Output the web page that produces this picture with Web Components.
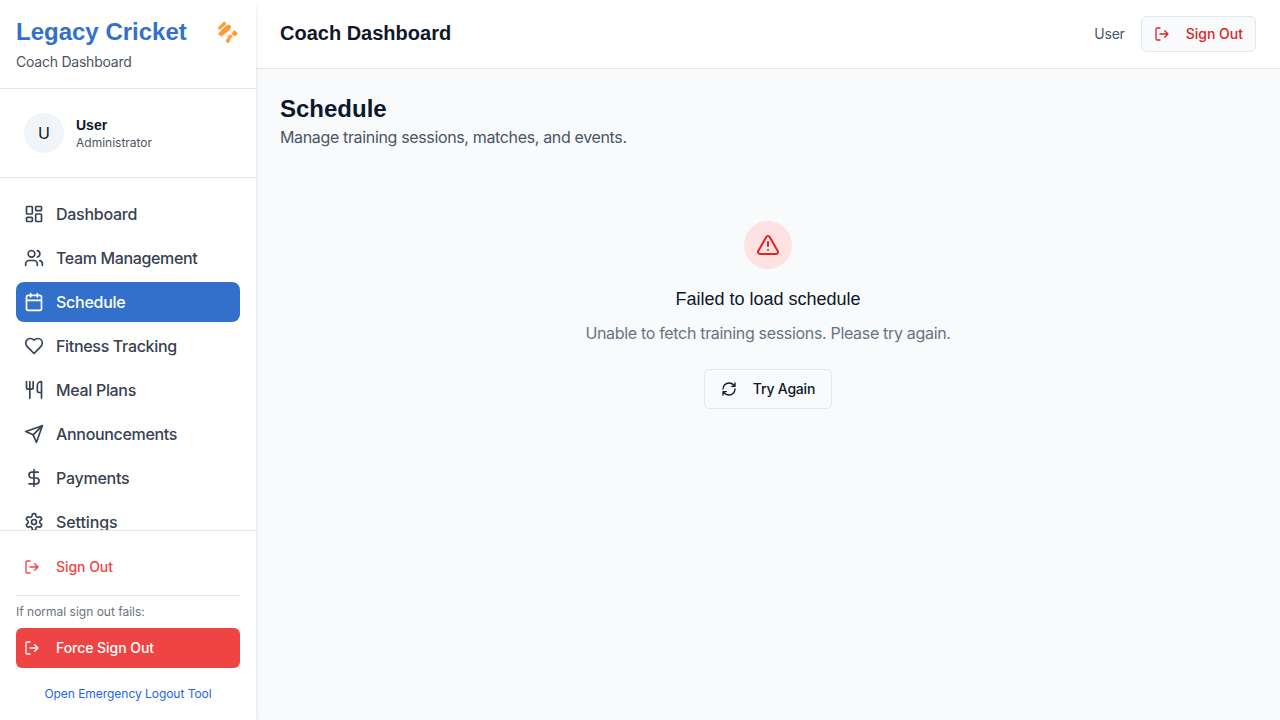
<!DOCTYPE html>
<html lang="en">
<head>
<meta charset="utf-8">
<title>Legacy Cricket</title>
<style>
html,body{margin:0;height:100%}
body{font-family:Inter,"Liberation Sans",sans-serif;font-size:16px;line-height:24px;color:#0f172a;background:#f8fafc;overflow:hidden}
</style>
</head>
<body>
<coach-app></coach-app>
<script>
const ICONS={
dashboard:'<rect width="7" height="9" x="3" y="3" rx="1"/><rect width="7" height="5" x="14" y="3" rx="1"/><rect width="7" height="9" x="14" y="12" rx="1"/><rect width="7" height="5" x="3" y="16" rx="1"/>',
users:'<path d="M16 21v-2a4 4 0 0 0-4-4H6a4 4 0 0 0-4 4v2"/><circle cx="9" cy="7" r="4"/><path d="M22 21v-2a4 4 0 0 0-3-3.87"/><path d="M16 3.13a4 4 0 0 1 0 7.75"/>',
calendar:'<path d="M8 2v4M16 2v4"/><rect width="18" height="18" x="3" y="4" rx="2"/><path d="M3 10h18"/>',
heart:'<path d="M19 14c1.49-1.46 3-3.21 3-5.5A5.5 5.5 0 0 0 16.5 3c-1.76 0-3 .5-4.5 2-1.5-1.5-2.74-2-4.5-2A5.5 5.5 0 0 0 2 8.5c0 2.3 1.5 4.05 3 5.5l7 7Z"/>',
utensils:'<path d="M3 2v7c0 1.1.9 2 2 2h4a2 2 0 0 0 2-2V2M7 2v20M21 15V2a5 5 0 0 0-5 5v6c0 1.1.9 2 2 2h3Zm0 0v7"/>',
send:'<path d="m22 2-7 20-4-9-9-4Z"/><path d="M22 2 11 13"/>',
dollar:'<path d="M12 2v20M17 5H9.5a3.5 3.5 0 0 0 0 7h5a3.5 3.5 0 0 1 0 7H6"/>',
settings:'<path d="M12.22 2h-.44a2 2 0 0 0-2 2v.18a2 2 0 0 1-1 1.73l-.43.25a2 2 0 0 1-2 0l-.15-.08a2 2 0 0 0-2.73.73l-.22.38a2 2 0 0 0 .73 2.73l.15.1a2 2 0 0 1 1 1.72v.51a2 2 0 0 1-1 1.74l-.15.09a2 2 0 0 0-.73 2.73l.22.38a2 2 0 0 0 2.73.73l.15-.08a2 2 0 0 1 2 0l.43.25a2 2 0 0 1 1 1.73V20a2 2 0 0 0 2 2h.44a2 2 0 0 0 2-2v-.18a2 2 0 0 1 1-1.73l.43-.25a2 2 0 0 1 2 0l.15.08a2 2 0 0 0 2.73-.73l.22-.39a2 2 0 0 0-.73-2.73l-.15-.08a2 2 0 0 1-1-1.74v-.5a2 2 0 0 1 1-1.74l.15-.09a2 2 0 0 0 .73-2.73l-.22-.38a2 2 0 0 0-2.73-.73l-.15.08a2 2 0 0 1-2 0l-.43-.25a2 2 0 0 1-1-1.73V4a2 2 0 0 0-2-2z"/><circle cx="12" cy="12" r="3"/>',
logout:'<path d="M9 21H5a2 2 0 0 1-2-2V5a2 2 0 0 1 2-2h4M16 17l5-5-5-5M21 12H9"/>',
alert:'<path d="m21.73 18-8-14a2 2 0 0 0-3.48 0l-8 14A2 2 0 0 0 4 21h16a2 2 0 0 0 1.73-3Z"/><path d="M12 9v4M12 17h.01"/>',
refresh:'<path d="M3 12a9 9 0 0 1 9-9 9.75 9.75 0 0 1 6.74 2.74L21 8M21 3v5h-5M21 12a9 9 0 0 1-9 9 9.75 9.75 0 0 1-6.74-2.74L3 16M8 16H3v5"/>',
cricket:'<g fill="currentColor" stroke-width=".8"><path d="M2.2 7.7 8.2 1.7l1.9 2-6.2 5.9z"/><path d="m2.6 13.6 2-2.1.4-.8 5.6-5.2 1 .1 1.3-1 2.2 2.2-1 1.3v1L8 14.2l-.9.2-1.8 1.9z"/><path d="m18.7 10.7 2.8 2.7-2.8 2.8-2.8-2.7z"/><path d="m15 14.9 1.3 1.4-2.5 2.4-.3 2.7-2.1 1.5-1.3-2.5 2.5-2.9-.6-1.1z"/></g>'
};
const define=(name,css,html)=>customElements.define(name,class extends HTMLElement{
  constructor(){
    super();
    this.attachShadow({mode:'open'}).innerHTML=`<style>*{box-sizing:border-box;margin:0}${css}</style>${typeof html==='function'?html(this):html}`;
  }
});
define('ui-icon',':host{display:block;width:var(--size,20px);height:var(--size,20px);flex:none}svg{display:block;width:100%;height:100%}',
 el=>`<svg viewBox="0 0 24 24" fill="none" stroke="currentColor" stroke-width="2" stroke-linecap="round" stroke-linejoin="round">${ICONS[el.getAttribute('name')]}</svg>`);
define('nav-item',`:host{display:flex;align-items:center;gap:12px;height:40px;flex:none;padding:0 8px;box-sizing:border-box;border-radius:8px;color:#374151;font-weight:500;letter-spacing:-.26px}
:host([icon="users"]){letter-spacing:-.36px}
:host([icon="heart"]),:host([icon="utensils"]),:host([icon="send"]){letter-spacing:-.32px}
:host([icon="settings"]){letter-spacing:-.1px}
:host([active]){background:#3370cc;color:#fff}`,
 el=>`<ui-icon name="${el.getAttribute('icon')}"></ui-icon><span><slot></slot></span>`);
define('icon-button',`:host{display:inline-flex;align-items:center;gap:16px;box-sizing:border-box;height:40px;padding:0 16px;border:1px solid #e2e8f0;border-radius:6px;background:#f8fafc;font-size:14px;line-height:20px;font-weight:500;letter-spacing:-.2px;--size:16px;white-space:nowrap}
:host([compact]){height:36px;padding:0 12px;color:#dc2626;letter-spacing:0}
:host([plain]),:host([danger]){display:flex;border:0;padding:0 8px;background:none;color:#ef4444;letter-spacing:-.05px}
:host([danger]){background:#ef4444;color:#fff}`,
 el=>`<ui-icon name="${el.getAttribute('icon')}"></ui-icon><span><slot></slot></span>`);
define('user-card',`:host{display:flex;align-items:center;gap:12px;padding:24px!important;border-bottom:1px solid #e5e7eb}
.avatar{width:40px;height:40px;border-radius:50%;background:#f1f5f9;display:grid;place-items:center}
.name{font:bold 14px/20px "Liberation Sans",sans-serif}
.role{font-size:12px;line-height:16px;color:#4b5563}`,
`<div class="avatar">U</div><div><p class="name">User</p><p class="role">Administrator</p></div>`);
define('side-bar',`:host{display:flex;flex-direction:column;width:256px;height:720px;background:#fff;box-shadow:0 4px 6px -1px rgba(0,0,0,.1),0 2px 4px -2px rgba(0,0,0,.1);position:relative;z-index:1}
header{padding:16px;border-bottom:1px solid #e5e7eb}
.brand{display:flex;justify-content:space-between;align-items:center}
h1{font:bold 24px/32px "Liberation Sans",sans-serif;color:#3370cc}
.brand ui-icon{--size:24px;color:#ff9933}
.sub{margin-top:4px;font-size:14px;line-height:20px;color:#4b5563;letter-spacing:-.23px}
nav{flex:1;min-height:0;overflow:hidden;padding:16px;display:flex;flex-direction:column;gap:4px}
footer{height:190px;box-sizing:border-box;border-top:1px solid #e5e7eb;padding:16px}
.force{margin-top:8px;border-top:1px solid #e5e7eb;padding-top:8px;font-size:12px;line-height:16px;color:#6b7280}
.force icon-button{margin-top:8px}
.link{margin-top:18px;text-align:center;color:#2563eb;letter-spacing:-.04px}`,
`<header><div class="brand"><h1>Legacy Cricket</h1><ui-icon name="cricket"></ui-icon></div><p class="sub">Coach Dashboard</p></header>
<user-card></user-card>
<nav><nav-item icon="dashboard">Dashboard</nav-item><nav-item icon="users">Team Management</nav-item><nav-item icon="calendar" active>Schedule</nav-item><nav-item icon="heart">Fitness Tracking</nav-item><nav-item icon="utensils">Meal Plans</nav-item><nav-item icon="send">Announcements</nav-item><nav-item icon="dollar">Payments</nav-item><nav-item icon="settings">Settings</nav-item></nav>
<footer><icon-button icon="logout" plain>Sign Out</icon-button><div class="force"><p>If normal sign out fails:</p><icon-button icon="logout" danger>Force Sign Out</icon-button><p class="link">Open Emergency Logout Tool</p></div></footer>`);
define('top-bar',`:host{display:flex;align-items:center;justify-content:space-between;height:69px;box-sizing:border-box;padding:0 24px;background:#fff;border-bottom:1px solid #e5e7eb}
h2{font:bold 20px/28px "Liberation Sans",sans-serif;padding-bottom:2px}
div{display:flex;align-items:center;gap:16px;font-size:14px;line-height:20px;color:#4b5563}
div>span{letter-spacing:-.2px}`,
`<h2>Coach Dashboard</h2><div><span>User</span><icon-button icon="logout" compact>Sign Out</icon-button></div>`);
define('error-state',`:host{display:flex;flex-direction:column;align-items:center;padding:72px 0 48px}
.badge{display:grid;place-items:center;width:48px;height:48px;border-radius:50%;background:#fee2e2;color:#dc2626;--size:24px}
h3{margin-top:16px;font:400 18px/28px "Liberation Sans",sans-serif}
p{margin:8px 0 24px;color:#6b7280;letter-spacing:-.32px}`,
`<div class="badge"><ui-icon name="alert"></ui-icon></div><h3>Failed to load schedule</h3><p>Unable to fetch training sessions. Please try again.</p><icon-button icon="refresh">Try Again</icon-button>`);
define('schedule-page',`:host{display:block;padding:24px!important}
h1{font:bold 24px/32px "Liberation Sans",sans-serif}
.lead{color:#4b5563;letter-spacing:-.35px}`,
`<h1>Schedule</h1><p class="lead">Manage training sessions, matches, and events.</p><error-state></error-state>`);
define('coach-app',`:host{display:grid;grid-template-columns:256px 1fr;height:720px}`,
`<side-bar></side-bar><main><top-bar></top-bar><schedule-page></schedule-page></main>`);
</script>
</body>
</html>
